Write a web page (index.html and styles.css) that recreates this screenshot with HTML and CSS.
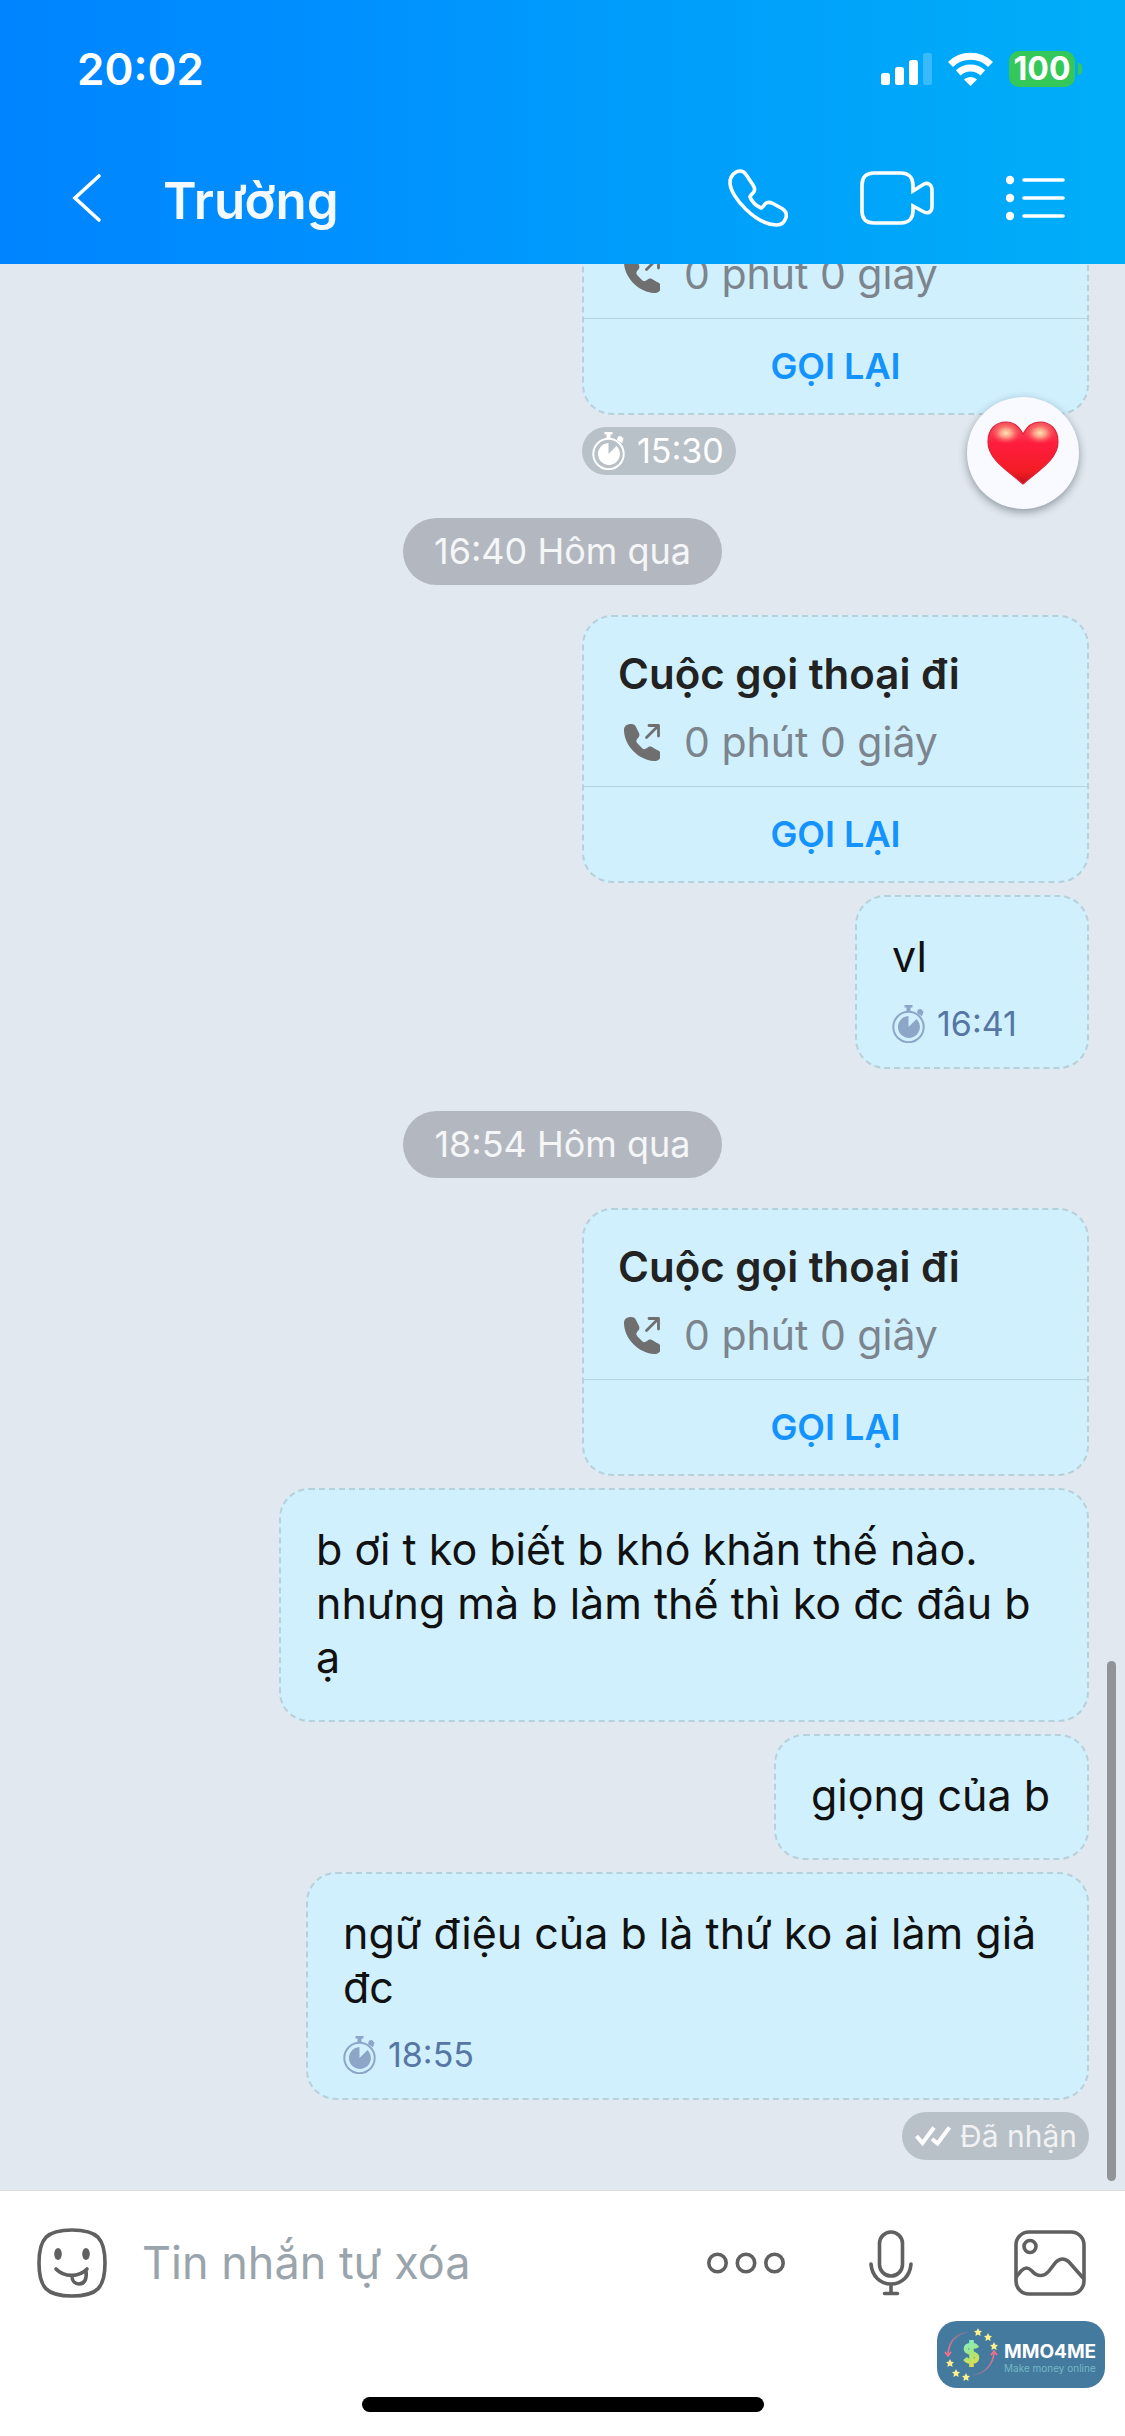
FILE: index.html
```html
<!DOCTYPE html>
<html lang="vi">
<head>
<meta charset="utf-8">
<meta name="viewport" content="width=device-width, initial-scale=1">
<title>Trường</title>
<link rel="stylesheet" href="styles.css">
</head>
<body>
<svg class="defs" aria-hidden="true">
  <symbol id="timer" viewBox="0 0 33 38">
    <circle cx="16.500" cy="22" r="15.200" fill="none" stroke="currentColor" stroke-width="2"/>
    <path d="M12.500 0h8v2.500h-2V6h-4V2.500h-2zM25 8l1-3.500 3-.4 2.500 2.600-1.500 4.500z" fill="currentColor"/>
    <path d="M16.500 11v11l8-8A11 11 0 1 1 16.500 11z" fill="currentColor"/>
  </symbol>
  <symbol id="call-out" viewBox="0 0 36 37">
    <path d="M0 6C0 2 3 0 7 0c3 0 4 1 5 3l3 6c1 3 0 4-2 6-1 2-1 3 1 5l4 4c2 2 3 1 5 0 1-1 3-2 5-1l5 3c3 1 4 3 4 5 0 4-3 6-7 6C14 36 0 21 0 6z" fill="currentColor"/>
    <path d="M22.500 13.500L34 2M25 1.500h9.500V12" fill="none" stroke="currentColor" stroke-width="2.800" stroke-linecap="round" stroke-linejoin="round"/>
  </symbol>
</svg>
<div class="app">
  <header class="header">
    <div class="status">
      <time class="clock">20:02</time>
      <div class="status-icons">
        <svg width="51" height="34" viewBox="0 0 51 34" fill="#fff" aria-hidden="true"><rect y="21" width="9" height="12" rx="2.500"/><rect x="14" y="15" width="9" height="18" rx="2.500"/><rect x="28" y="8" width="9" height="25" rx="2.500"/><rect x="42" y="1" width="9" height="32" rx="2.500" opacity=".22"/></svg>
        <svg class="wifi" width="45" height="34" viewBox="0 0 45 34" aria-hidden="true"><g fill="none" stroke="#fff" stroke-width="7"><path d="M2.500 12.500C13.500 1.500 31.500 1.500 42.500 12.500"/><path d="M10.200 20.800c7-6.300 17.600-6.300 24.600 0"/></g><path d="M16 27.500c3.700-3.500 9.300-3.500 13 0L22.500 34z" fill="#fff"/></svg>
        <span class="battery">100</span>
      </div>
    </div>
    <nav class="nav">
      <button class="icon-button back" type="button" aria-label="Quay lại"><svg width="30" height="50" viewBox="0 0 30 50" fill="none" stroke="#fff" stroke-width="3.600" stroke-linecap="round"><path d="M27 3L3 25l24 22"/></svg></button>
      <h1 class="name">Trường</h1>
      <div class="nav-actions">
        <button class="icon-button" type="button" aria-label="Gọi thoại"><svg width="60" height="58" viewBox="0 0 60 58" fill="none" stroke="#fff" stroke-width="3.600"><path d="M2 13.500C2 7 7 2 12 2c3 0 4.500 1 6 3.500l7 10.500c2 3 2 6 0 8-1.500 1.500-3 2.500-3 4 2 5 5.500 8.500 11 11 1.500 0 2.500-2 4-4 2.500-2.500 5-2 8-.5l9 5c4 2.500 5 5.500 4 9-1.500 5-5 7.500-9.500 7.500C28 55.500 2 28 2 13.500z"/></svg></button>
        <button class="icon-button" type="button" aria-label="Gọi video"><svg width="74" height="54" viewBox="0 0 74 54" fill="none" stroke="#fff" stroke-width="3.600" stroke-linejoin="miter"><path d="M53 20V14C53 6 48 2 41 2H14C6 2 2 6 2 14v26c0 8 4 12 12 12h27c7 0 12-4 12-12v-5l11 6c4 2 8 0 8-5V19c0-5-4-8-8-6z"/></svg></button>
        <button class="icon-button" type="button" aria-label="Tùy chọn"><svg width="60" height="46" viewBox="0 0 60 46" fill="#fff" stroke="#fff"><g stroke="none"><circle cx="4" cy="5" r="4.200"/><circle cx="4" cy="23" r="4.200"/><circle cx="4" cy="41" r="4.200"/></g><path d="M18 5h39M18 23h39M18 41h39" stroke-width="3.600" stroke-linecap="round"/></svg></button>
      </div>
    </nav>
  </header>

  <main class="chat">
    <article class="bubble call">
      <div class="call-body"><h2>Cuộc gọi thoại đi</h2><p><svg class="call-icon"><use href="#call-out"/></svg>0 phút 0 giây</p></div>
      <button class="call-back" type="button">GỌI LẠI</button>
    </article>
    <div class="call-foot">
      <div class="pill"><svg class="timer"><use href="#timer"/></svg><time>15:30</time></div>
      <button class="reaction" type="button" aria-label="Thả tim">
        <svg width="72" height="64" viewBox="0 0 72 64">
          <defs>
            <linearGradient id="heart" x1="0" y1="0" x2="0" y2="1"><stop offset="0" stop-color="#f2545c"/><stop offset=".35" stop-color="#ff1c3e"/><stop offset=".8" stop-color="#f21d24"/><stop offset="1" stop-color="#c4101a"/></linearGradient>
            <radialGradient id="gloss"><stop offset="0" stop-color="#ffe6b8"/><stop offset=".4" stop-color="#ffb492" stop-opacity=".8"/><stop offset="1" stop-color="#ff5060" stop-opacity="0"/></radialGradient>
          </defs>
          <path d="M36 13C41 3 47 1 53 1c11 0 18 8 18 20 0 17-19 28-35 42C20 49 1 38 1 21 1 9 8 1 19 1c6 0 12 2 17 12z" fill="url(#heart)" stroke="#dc2639" stroke-width="1.200"/>
          <ellipse cx="19" cy="12" rx="15" ry="11" fill="url(#gloss)"/><ellipse cx="53" cy="12" rx="15" ry="11" fill="url(#gloss)"/>
        </svg>
      </button>
    </div>

    <time class="date">16:40 Hôm qua</time>

    <article class="bubble call">
      <div class="call-body"><h2>Cuộc gọi thoại đi</h2><p><svg class="call-icon"><use href="#call-out"/></svg>0 phút 0 giây</p></div>
      <button class="call-back" type="button">GỌI LẠI</button>
    </article>
    <article class="bubble text timed">
      <p>vl</p>
      <div class="sent"><svg class="timer"><use href="#timer"/></svg><time>16:41</time></div>
    </article>

    <time class="date">18:54 Hôm qua</time>

    <article class="bubble call">
      <div class="call-body"><h2>Cuộc gọi thoại đi</h2><p><svg class="call-icon"><use href="#call-out"/></svg>0 phút 0 giây</p></div>
      <button class="call-back" type="button">GỌI LẠI</button>
    </article>
    <article class="bubble text"><p>b ơi t ko biết b khó khăn thế nào. nhưng mà b làm thế thì ko đc đâu b ạ</p></article>
    <article class="bubble text"><p>giọng của b</p></article>
    <article class="bubble text timed">
      <p>ngữ điệu của b là thứ ko ai làm giả đc</p>
      <div class="sent"><svg class="timer"><use href="#timer"/></svg><time>18:55</time></div>
    </article>
    <div class="pill received"><svg width="36" height="20" viewBox="0 0 36 20" fill="none" stroke="#fff" stroke-width="4" aria-hidden="true"><path d="M1.500 10l6 7L19 1.500M17 13l5.500 4.500L34.500 1.500"/></svg>Đã nhận</div>
    <div class="scrollbar"></div>
  </main>

  <footer class="footer">
    <form class="composer">
      <button class="icon-button" type="button" aria-label="Nhãn dán"><svg width="70" height="70" viewBox="0 0 70 70" fill="none" stroke="#606060" stroke-width="3.600" stroke-linecap="round"><path d="M35 2C10 2 2 10 2 35s8 33 33 33 33-8 33-33S60 2 35 2z"/><path d="M19 41c8 8.500 23 8.500 31 0M35 48c0 5 3 8 7 8 6 0 8-6 7-13"/><g fill="#606060" stroke="none"><ellipse cx="21" cy="26" rx="3.800" ry="6"/><ellipse cx="49" cy="26" rx="3.800" ry="6"/></g></svg></button>
      <input class="message" type="text" placeholder="Tin nhắn tự xóa" aria-label="Tin nhắn">
      <div class="composer-actions">
        <button class="icon-button" type="button" aria-label="Thêm"><svg width="78" height="22" viewBox="0 0 78 22" fill="none" stroke="#606060" stroke-width="3.600"><circle cx="10.500" cy="11" r="8.700"/><circle cx="39" cy="11" r="8.700"/><circle cx="67.500" cy="11" r="8.700"/></svg></button>
        <button class="icon-button" type="button" aria-label="Ghi âm"><svg width="44" height="66" viewBox="0 0 44 66" fill="none" stroke="#606060" stroke-width="3.600" stroke-linecap="round"><rect x="10.500" y="2" width="23" height="44" rx="11.500"/><path d="M2 34c1 12 9 20 20 20s19-8 20-20M22 54v9M15.500 63.500h13"/></svg></button>
        <button class="icon-button" type="button" aria-label="Gửi ảnh"><svg width="72" height="66" viewBox="0 0 72 66" fill="none" stroke="#606060" stroke-width="3.600"><rect x="2" y="2" width="68" height="62" rx="13"/><circle cx="16" cy="16.500" r="6"/><path d="M2 47l5-6c4-4 7-4 11 0 6 7 13 5 17 0l7-9c4-4 9-4 13 0l15 17"/></svg></button>
      </div>
    </form>
    <div class="home"></div>
  </footer>

  <aside class="brand">
    <svg class="brand-mark" width="54" height="56" viewBox="0 0 54 56" aria-hidden="true">
      <defs>
        <linearGradient id="arc-a" x1="1" y1="0" x2="0" y2="1"><stop offset="0" stop-color="#ef7a8c" stop-opacity=".1"/><stop offset="1" stop-color="#ff6f86"/></linearGradient>
        <linearGradient id="arc-b" x1="0" y1="1" x2="1" y2="0"><stop offset="0" stop-color="#ef7a8c" stop-opacity=".1"/><stop offset="1" stop-color="#ff6f86"/></linearGradient>
        <linearGradient id="cash" gradientUnits="userSpaceOnUse" x1="20" y1="14" x2="34" y2="40"><stop offset="0" stop-color="#7ff0cf"/><stop offset=".5" stop-color="#a9e67a"/><stop offset="1" stop-color="#f3d93d"/></linearGradient>
        <path id="star" d="M0-4L1.300-1.300 4-1 2 1 2.600 4 0 2.600-2.600 4-2 1-4-1-1.300-1.300z"/>
      </defs>
      <path d="M24 5C12 7 5 15 4 27" fill="none" stroke="url(#arc-a)" stroke-width="1.600"/>
      <path d="M1 25l3 4 3-4" fill="none" stroke="#ff6f86" stroke-width="1.600"/>
      <path d="M29 48c12-1 20-11 21-22" fill="none" stroke="url(#arc-b)" stroke-width="1.600"/>
      <path d="M47 28l3-4 3 4" fill="none" stroke="#ff6f86" stroke-width="1.600"/>
      <g fill="#fff08c"><use href="#star" x="34" y="5"/><use href="#star" x="44" y="10"/><use href="#star" x="50" y="19"/><use href="#star" x="6" y="36"/><use href="#star" x="12" y="46"/><use href="#star" x="22" y="50"/></g>
      <path d="M33 21c-1-2-3-3-5-3-4 0-6 1.500-6 4 0 5 11 3 11 8.500 0 3-2 4-5.500 4-3 0-5-1-6.500-3M27.500 13v27" fill="none" stroke="url(#cash)" stroke-width="4.600"/>
    </svg>
    <div class="brand-text"><strong>MMO4ME</strong><span>Make money online</span></div>
  </aside>
</div>
</body>
</html>
```
FILE: styles.css
```css
* { box-sizing: border-box; margin: 0; padding: 0; }
body { font-family: Inter, "Noto Sans", sans-serif; color: #111; background: #fff; }
button, input { font: inherit; color: inherit; background: none; border: 0; }
button { cursor: pointer; }
svg { display: block; flex: none; }
.defs { position: absolute; width: 0; height: 0; }

.app { position: relative; display: flex; flex-direction: column; height: 100vh; overflow: hidden; }

/* Header */
.header { flex: none; color: #fff; background: linear-gradient(90deg, #0084ff 0%, #0090ff 30%, #009dfb 56%, #00aef8 100%); }
.status { display: flex; align-items: center; justify-content: space-between; height: 132px; padding: 6px 43px 0 77px; }
.clock { font-size: 44px; font-weight: 600; line-height: 56px; }
.status-icons { display: flex; align-items: center; gap: 16px; }
.battery { position: relative; width: 66px; height: 36px; margin-right: 7px; border-radius: 10px; background: #34c759; font-size: 32px; font-weight: 700; line-height: 36px; text-align: center; }
.battery::after { content: ""; position: absolute; left: 69px; top: 12px; width: 4px; height: 12px; border-radius: 0 4px 4px 0; background: #34c759; }
.nav { display: flex; align-items: center; height: 132px; padding: 0 59px 0 72px; }
.back { margin-right: 61px; }
.name { flex: 1; padding-top: 6px; font-size: 51px; font-weight: 600; line-height: 64px; color: #f3f9ff; }
.nav-actions { display: flex; align-items: center; gap: 72px; }

/* Conversation */
.chat { position: relative; flex: 1; min-height: 0; display: flex; flex-direction: column; justify-content: flex-end; align-items: flex-end; gap: 12px; padding: 0 36px 30px; background: #e1e8f0; overflow: hidden; }
.chat > * { flex: none; }
.bubble { border: 2px dashed #bad0d9; border-radius: 30px; background: #d0f0fe; }
.call { width: 507px; }
.call-body { padding: 30px 34px 17px; }
.call h2 { font-size: 42px; font-weight: 600; line-height: 54px; color: #222; margin-bottom: 14px; }
.call p { display: flex; align-items: center; gap: 24px; padding-left: 6px; font-size: 41px; line-height: 54px; color: #7c848d; }
.call-icon { width: 36px; height: 37px; color: #6f6f6f; }
.call-back { display: block; width: 100%; height: 95px; border-top: 1px solid #b5d3e0; color: #1493ff; font-size: 36px; font-weight: 600; }
.call-foot { position: relative; display: flex; align-items: flex-start; width: 507px; height: 49px; }
.pill { display: flex; align-items: center; gap: 12px; height: 48px; padding: 0 12px 0 10px; border-radius: 24px; background: #b8c0c8; color: #fff; font-size: 34px; line-height: 48px; }
.timer { width: 33px; height: 38px; }
.reaction { position: absolute; right: 10px; top: -30px; display: grid; place-items: center; width: 112px; height: 112px; border-radius: 50%; background: #f8faff; box-shadow: 0 3px 9px rgba(40, 50, 60, .45); }
.date { align-self: center; height: 67px; margin: 30px 0 18px; padding: 0 31px; border-radius: 34px; background: #b3b8c0; color: #f5f6f8; font-size: 36px; line-height: 67px; }
.text { min-width: 234px; max-width: 810px; padding: 32px 37px 36px 35px; font-size: 43px; line-height: 54px; }
.timed { max-width: 783px; padding-bottom: 25px; }
.sent { display: flex; align-items: center; gap: 12px; height: 36px; margin-top: 23px; color: #5676a3; font-size: 34px; line-height: 36px; }
.sent .timer { color: #8da6c8; }
.received { gap: 9px; padding-left: 13px; font-size: 30px; color: #f0f2f4; }
.scrollbar { position: absolute; right: 9px; bottom: 9px; width: 9px; height: 27%; border-radius: 5px; background: #909499; }

/* Composer */
.footer { flex: none; border-top: 1px solid #dcdde0; background: #fff; }
.composer { display: flex; align-items: center; height: 144px; padding: 0 39px 0 37px; }
.message { flex: 1; min-width: 0; margin-left: 35px; font-size: 45px; line-height: 60px; outline: 0; }
.message::placeholder { color: #9aa4ac; opacity: 1; }
.composer-actions { display: flex; align-items: center; }
.composer-actions > :nth-child(2) { margin: 0 101px 0 84px; }
.home { width: 402px; height: 15px; margin: 62px auto 24px; border-radius: 8px; background: #000; }

/* Sponsor badge */
.brand { position: absolute; right: 20px; bottom: 48px; display: flex; align-items: center; gap: 6px; width: 168px; height: 67px; padding-left: 7px; border-radius: 20px; background: #457a9f; }
.brand-text { display: flex; flex-direction: column; padding-top: 8px; }
.brand-text strong { color: #fff; font-size: 19px; line-height: 18px; }
.brand-text span { font-size: 10px; line-height: 14px; white-space: nowrap; color: #72b8c4; }
```
